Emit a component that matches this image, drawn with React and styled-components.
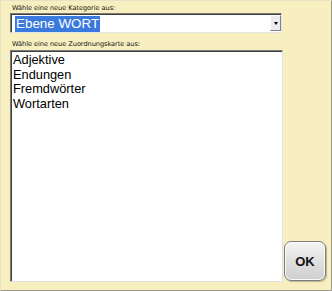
import React from "react";
import styled, { createGlobalStyle } from "styled-components";

const Global = createGlobalStyle`
  html, body { margin: 0; padding: 0; background: #ffffff; }
  body { font-family: "Liberation Sans", Arial, sans-serif; }
`;

const Frame = styled.div`
  box-sizing: border-box;
  width: 332px;
  height: 291px;
  background: #f7efbf;
  border-top: 1px solid #e8e2c4;
  border-left: 1px solid #e8e2c4;
  border-right: 1px solid #9c9a90;
  border-bottom: 1px solid #9c9a90;
  padding: 2px 0 0 9px;
  display: flex;
  flex-direction: column;
`;

const Label = styled.div`
  font-family: Tahoma, "DejaVu Sans", "Liberation Sans", sans-serif;
  font-size: 6.6px;
  line-height: 10px;
  height: 10px;
  color: #111;
  padding-left: 2px;
  letter-spacing: -0.05px;
`;

const Select = styled.div`
  box-sizing: border-box;
  width: 272px;
  height: 20px;
  margin-bottom: 6px;
  background: #fff;
  border-top: 1px solid #7a7a7a;
  border-left: 1px solid #7a7a7a;
  border-right: 1px solid #e6e6e6;
  border-bottom: 1px solid #e6e6e6;
  box-shadow: inset 1px 1px 0 #404040;
  display: flex;
  align-items: stretch;
  padding: 1px 0 1px 4px;
`;

const SelectedText = styled.span`
  background: #3a79dd;
  color: #fff;
  font-size: 13.4px;
  line-height: 16px;
  padding: 0 1px 0 1px;
  align-self: center;
  margin-top: 1px;
`;

const Spacer = styled.div`
  flex: 1;
`;

const DropButton = styled.div`
  width: 11px;
  box-sizing: border-box;
  background: #ececec;
  border-top: 1px solid #fff;
  border-left: 1px solid #fff;
  border-right: 1px solid #808080;
  border-bottom: 1px solid #808080;
  display: flex;
  align-items: center;
  justify-content: center;
`;

const Arrow = styled.div`
  width: 0;
  height: 0;
  border-left: 2.5px solid transparent;
  border-right: 2.5px solid transparent;
  border-top: 3px solid #000;
`;

const Row = styled.div`
  display: flex;
  align-items: flex-end;
  gap: 1px;
  margin-top: 1px;
`;

const ListBox = styled.div`
  box-sizing: border-box;
  width: 273px;
  height: 232px;
  background: #fff;
  border-top: 1px solid #7a7a7a;
  border-left: 1px solid #7a7a7a;
  border-right: 1px solid #e0e0e6;
  border-bottom: 1px solid #e0e0e6;
  box-shadow: inset 1px 1px 0 #404040;
  padding: 2px 0 0 2px;
`;

const Item = styled.div`
  font-size: 12.8px;
  line-height: 14.5px;
  color: #000;
`;

const OkButton = styled.div`
  box-sizing: border-box;
  width: 42px;
  height: 40px;
  margin-bottom: 1px;
  border: 1px solid #7c7c7c;
  border-radius: 7px;
  background: linear-gradient(#f4f4f4 0%, #e2e2e2 45%, #cfcfcf 100%);
  box-shadow: inset 0 0 0 1px #fafafa, 1px 1px 1px rgba(0,0,0,0.25);
  display: flex;
  align-items: center;
  justify-content: center;
  font-weight: bold;
  font-size: 13px;
  color: #111;
`;

export default function App() {
  return (
    <>
      <Global />
      <Frame>
        <Label>Wähle eine neue Kategorie aus:</Label>
        <Select>
          <SelectedText>Ebene WORT</SelectedText>
          <Spacer />
          <DropButton>
            <Arrow />
          </DropButton>
        </Select>
        <Label>Wähle eine neue Zuordnungskarte aus:</Label>
        <Row>
          <ListBox>
            <Item>Adjektive</Item>
            <Item>Endungen</Item>
            <Item>Fremdwörter</Item>
            <Item>Wortarten</Item>
          </ListBox>
          <OkButton>OK</OkButton>
        </Row>
      </Frame>
    </>
  );
}
